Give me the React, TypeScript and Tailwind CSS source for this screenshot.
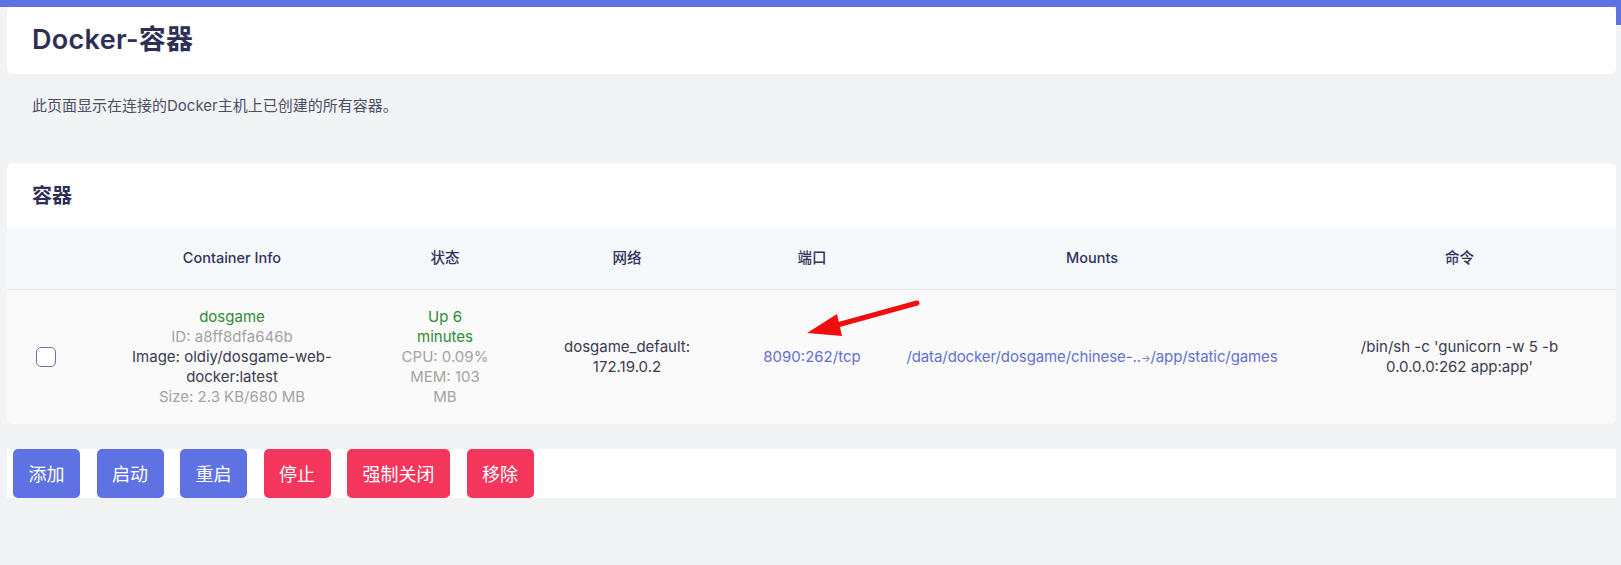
import React from 'react';

const font = "font-['Inter','Noto_Sans_CJK_SC',sans-serif]";
const cjk = "font-['Noto_Sans_CJK_SC','Noto_Sans',sans-serif]";

const columns = ['', 'Container Info', '状态', '网络', '端口', 'Mounts', '命令'];

const actions = [
  { label: '添加', danger: false },
  { label: '启动', danger: false },
  { label: '重启', danger: false },
  { label: '停止', danger: true },
  { label: '强制关闭', danger: true },
  { label: '移除', danger: true },
];

const grid = 'grid grid-cols-[78px_294px_132px_232px_138px_422px_1fr]';

export default function App() {
  return (
    <div className={`min-h-[565px] bg-[#f2f3f5] ${font} text-[#32325d]`}>
      {/* header */}
      <div className="flex bg-[linear-gradient(#5e72e4,#5e72e4)] bg-no-repeat bg-[length:100%_7px] pt-[7px]">
        <div className="ml-[7px] flex-1 h-[67px] bg-white rounded-md flex items-center px-[25px]">
          <h1 className="text-[27px] font-semibold tracking-[0.3px] text-[#2f2f55]">Docker-容器</h1>
        </div>
        <div className="w-[5px] h-[25px] -mt-[7px] bg-[#5e72e4]" />
      </div>

      <p className="mt-[22px] pl-[32px] text-[15px] leading-5 text-[#4a4f66]">
        此页面显示在连接的Docker主机上已创建的所有容器。
      </p>

      {/* containers card */}
      <div className="relative mt-[47px] ml-[7px] mr-[5px] bg-white rounded-md overflow-hidden">
        <div className="h-[64px] flex items-center px-[25px]">
          <h2 className={`text-[20px] font-bold text-[#2f2f55] ${cjk}`}>容器</h2>
        </div>

        <div className={`${grid} h-[63px] bg-[#f6f9fc] border-b border-[#e3e6ea] items-center text-center text-[14.5px] font-medium text-[#32325d]`}>
          {columns.map((c, i) => (
            <div key={i}>{c}</div>
          ))}
        </div>

        <div className={`${grid} h-[134px] bg-[#fafafa] items-center text-center text-[15px] leading-5`}>
          <div className="flex justify-center">
            <div className="w-[20px] h-[20px] rounded-[5px] border-[1.5px] border-[#6e73a3] bg-white" />
          </div>
          <div>
            <div className="text-[#2e8b34]">dosgame</div>
            <div className="text-[#a3a3a3]">ID: a8ff8dfa646b</div>
            <div className="text-[#3a3a50]">Image: oldiy/dosgame-web-</div>
            <div className="text-[#3a3a50]">docker:latest</div>
            <div className="text-[#a3a3a3]">Size: 2.3 KB/680 MB</div>
          </div>
          <div>
            <div className="text-[#2e8b34]">Up 6</div>
            <div className="text-[#2e8b34]">minutes</div>
            <div className="text-[#a3a3a3]">CPU: 0.09%</div>
            <div className="text-[#a3a3a3]">MEM: 103</div>
            <div className="text-[#a3a3a3]">MB</div>
          </div>
          <div className="text-[#3a3a50]">
            <div>dosgame_default:</div>
            <div>172.19.0.2</div>
          </div>
          <div className="text-[#6470d3]">8090:262/tcp</div>
          <div className="text-[#6470d3] whitespace-nowrap tracking-[-0.1px]">
            /data/docker/dosgame/chinese-..<span className="text-[10px]">→</span>/app/static/games
          </div>
          <div className="text-[#3a3a50]">
            <div>/bin/sh -c 'gunicorn -w 5 -b</div>
            <div>0.0.0.0:262 app:app'</div>
          </div>
        </div>

        {/* red annotation arrow */}
        <svg className="absolute left-[783px] top-[130px] pointer-events-none" width="140" height="60" viewBox="0 0 140 60">
          <line x1="127" y1="10" x2="40" y2="34" stroke="#f20d0d" strokeWidth="5" strokeLinecap="round" />
          <polygon points="17,40 47,21 52,43" fill="#f20d0d" />
        </svg>
      </div>

      {/* action buttons */}
      <div className="mt-[25px] ml-[7px] mr-[5px] h-[49px] bg-white flex gap-[16.5px] pl-[6px]">
        {actions.map((a) => (
          <button
            key={a.label}
            className={`h-full px-[15.5px] rounded-[5px] text-white text-[18px] ${cjk} ${a.danger ? 'bg-[#f5365c]' : 'bg-[#5e72e4]'}`}
          >
            {a.label}
          </button>
        ))}
      </div>
    </div>
  );
}
